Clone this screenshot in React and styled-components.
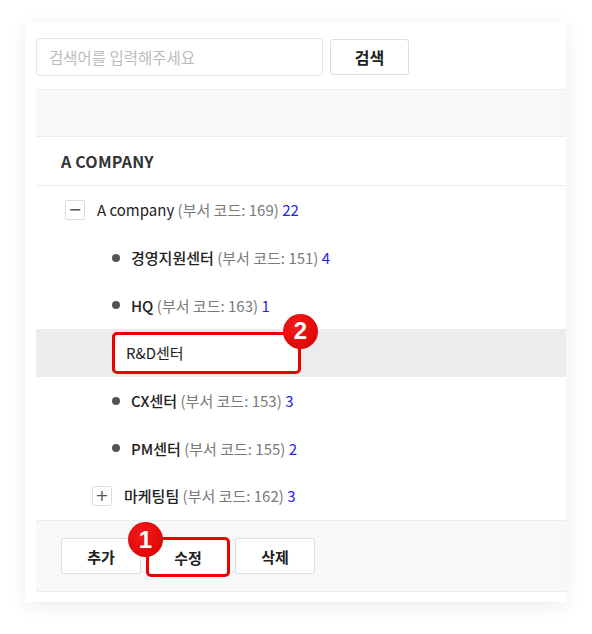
import React from "react";
import styled, { createGlobalStyle } from "styled-components";

const departments = [
  { name: "경영지원센터", code: 151, count: 4 },
  { name: "HQ", code: 163, count: 1 },
  { name: "R&D센터", editing: true },
  { name: "CX센터", code: 153, count: 3 },
  { name: "PM센터", code: 155, count: 2 },
];

const App = () => {
  return (
    <Page>
      <GlobalStyle />
      <Card>
        <SearchBar>
          <SearchInput placeholder="검색어를 입력해주세요" />
          <SearchButton>검색</SearchButton>
        </SearchBar>
        <Panel>
          <PanelHeader />
          <CompanyTitle>A COMPANY</CompanyTitle>
          <Tree>
            <TreeRow $indent={29}>
              <Toggle>−</Toggle>
              <Label>
                A company <Code>(부서 코드: 169)</Code> <Count>22</Count>
              </Label>
            </TreeRow>
            {departments.map((d, i) =>
              d.editing ? (
                <TreeRow key={i} $indent={76} $selected>
                  <EditBox>
                    <EditInput defaultValue={d.name} />
                    <Badge $at="right">2</Badge>
                  </EditBox>
                </TreeRow>
              ) : (
                <TreeRow key={i} $indent={76}>
                  <Bullet />
                  <Label $strong>
                    {d.name} <Code>(부서 코드: {d.code})</Code>{" "}
                    <Count>{d.count}</Count>
                  </Label>
                </TreeRow>
              )
            )}
            <TreeRow $indent={56}>
              <Toggle>+</Toggle>
              <Label $strong>
                마케팅팀 <Code>(부서 코드: 162)</Code> <Count>3</Count>
              </Label>
            </TreeRow>
          </Tree>
          <Footer>
            <ActionButton>추가</ActionButton>
            <ActionButton $marked>
              수정
              <Badge $at="left">1</Badge>
            </ActionButton>
            <ActionButton>삭제</ActionButton>
          </Footer>
        </Panel>
      </Card>
    </Page>
  );
};

const GlobalStyle = createGlobalStyle`
  * { box-sizing: border-box; }
  body {
    margin: 0;
    background: #ffffff;
    font-family: "Noto Sans CJK KR", "Noto Sans", sans-serif;
  }
`;
const Page = styled.div`
  width: 592px;
  height: 634px;
  padding: 22px 0 0 25px;
`;
const Card = styled.div`
  width: 541px;
  height: 580px;
  background: #fff;
  box-shadow: 0 4px 18px rgba(0, 0, 0, 0.08);
  padding: 16px 0 10px 11px;
  display: flex;
  flex-direction: column;
`;
const SearchBar = styled.div`
  display: flex;
  align-items: center;
  gap: 7px;
  margin-bottom: 13px;
`;
const SearchInput = styled.input`
  width: 287px;
  height: 38px;
  border: 1px solid #e6e6e6;
  border-radius: 3px;
  padding: 0 12px;
  font-family: inherit;
  font-size: 15.5px;
  color: #333;
  outline: none;
  &::placeholder {
    color: #bcbcbc;
  }
`;
const SearchButton = styled.button`
  width: 79px;
  height: 36px;
  background: #fff;
  border: 1px solid #dcdcdc;
  border-radius: 3px;
  font-family: inherit;
  font-size: 16px;
  font-weight: 700;
  color: #222;
`;
const Panel = styled.div`
  flex: 1;
  display: flex;
  flex-direction: column;
`;
const PanelHeader = styled.div`
  height: 48px;
  background: #f7f8fa;
  border-top: 1px solid #f0f0f2;
  border-bottom: 1px solid #ececee;
`;
const CompanyTitle = styled.div`
  height: 49px;
  display: flex;
  align-items: center;
  padding-left: 25px;
  border-bottom: 1px solid #ececee;
  font-size: 16px;
  font-weight: 700;
  letter-spacing: 0.2px;
  color: #333;
`;
const Tree = styled.div`
  flex: 1;
  display: flex;
  flex-direction: column;
`;
const TreeRow = styled.div`
  height: 47.7px;
  display: flex;
  align-items: center;
  padding-left: ${(p) => p.$indent}px;
  background: ${(p) => (p.$selected ? "#ececef" : "transparent")};
`;
const Toggle = styled.span`
  width: 20px;
  height: 20px;
  border: 1px solid #dcdcdc;
  border-radius: 2px;
  display: flex;
  align-items: center;
  justify-content: center;
  margin-right: 12px;
  font-family: "DejaVu Sans", sans-serif;
  font-size: 16px;
  line-height: 1;
  color: #555;
  background: #fff;
`;
const Bullet = styled.span`
  width: 8px;
  height: 8px;
  border-radius: 50%;
  background: #555;
  margin-right: 11px;
`;
const Label = styled.span`
  font-size: 15px;
  font-weight: ${(p) => (p.$strong ? 500 : 400)};
  color: #222;
  white-space: nowrap;
`;
const Code = styled.span`
  font-weight: 400;
  color: #7a7a7a;
`;
const Count = styled.span`
  font-weight: 400;
  color: #2323f0;
`;
const EditBox = styled.div`
  position: relative;
`;
const EditInput = styled.input`
  width: 189px;
  height: 42px;
  border: 3px solid #ee0000;
  border-radius: 5px;
  padding: 0 11px;
  background: #fff;
  font-family: inherit;
  font-size: 15px;
  color: #222;
  outline: none;
`;
const Badge = styled.span`
  position: absolute;
  top: -18px;
  ${(p) => (p.$at === "right" ? "right: -17px;" : "left: -21px;")}
  width: 35px;
  height: 35px;
  border-radius: 50%;
  background: radial-gradient(circle at 40% 35%, #f21a1a, #d80000);
  color: #fff;
  display: flex;
  align-items: center;
  justify-content: center;
  font-family: "Liberation Sans", Arial, sans-serif;
  font-size: 24px;
  font-weight: 700;
`;
const Footer = styled.div`
  height: 72px;
  background: #f7f8fa;
  border-top: 1px solid #ececee;
  border-bottom: 1px solid #ececee;
  display: flex;
  align-items: flex-start;
  gap: 7px;
  padding: 17px 0 0 25px;
`;
const ActionButton = styled.button`
  position: relative;
  width: ${(p) => (p.$marked ? 84 : 80)}px;
  height: ${(p) => (p.$marked ? 40 : 36)}px;
  margin: ${(p) => (p.$marked ? "-1px -2px 0" : "0")};
  background: #fff;
  border: ${(p) => (p.$marked ? "3px solid #ee0000" : "1px solid #dcdcdc")};
  border-radius: ${(p) => (p.$marked ? 5 : 3)}px;
  font-family: inherit;
  font-size: 15px;
  font-weight: 700;
  color: #222;
  padding: 0;
`;

export default App;
